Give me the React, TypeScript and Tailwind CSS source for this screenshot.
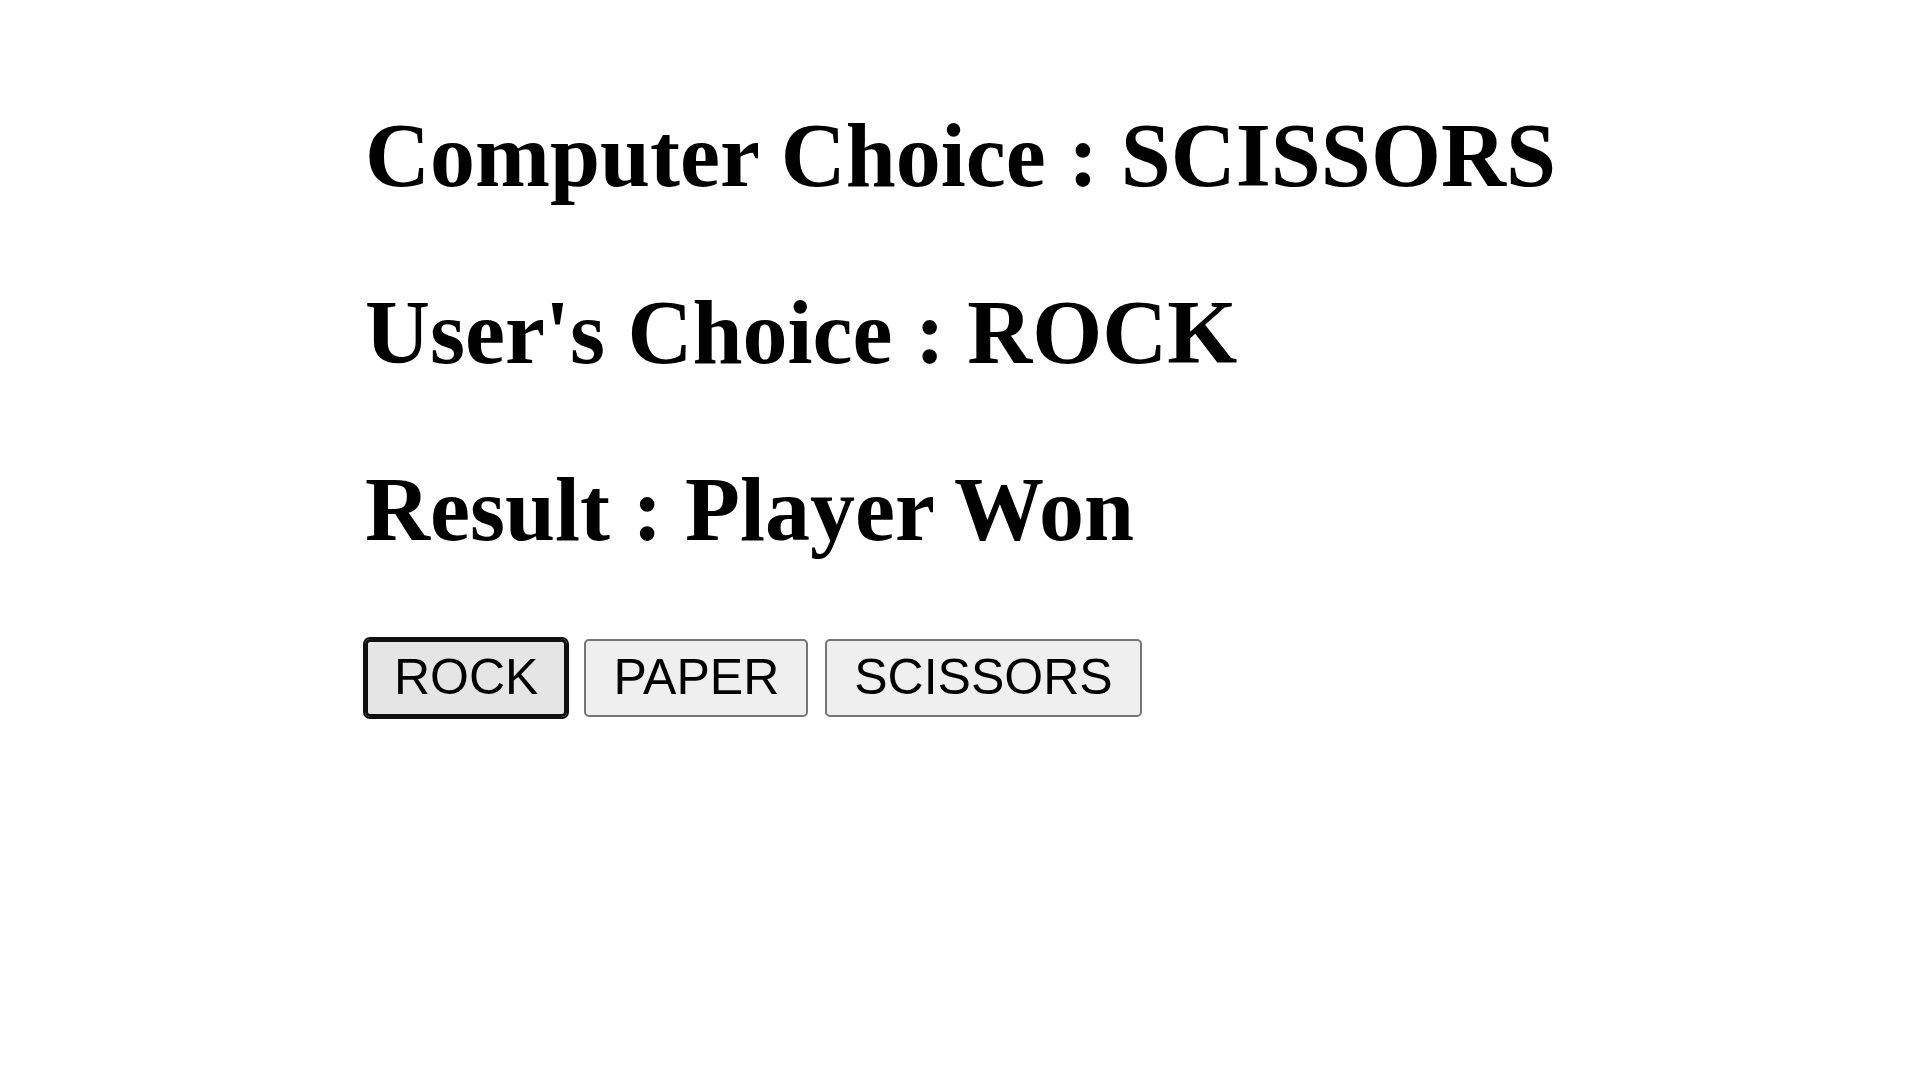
import { useState } from "react"

const choices = ["ROCK", "PAPER", "SCISSORS"]

const App = () => {
    const [computer] = useState("SCISSORS")
    const [user, setUser] = useState("ROCK")

    return (
        <div className="min-h-screen bg-white pl-[365px] pt-[105px] text-black">
            <div className="flex flex-col gap-[75px] font-['Liberation_Serif','Times_New_Roman',serif] text-[90px] leading-[102px] font-bold">
                <h2>Computer Choice : {computer}</h2>
                <h2>User's Choice : {user}</h2>
                <h2>Result : Player Won</h2>
            </div>
            <div className="mt-[78px] flex items-start gap-[17px]">
                {choices.map((c) => (
                    <button
                        key={c}
                        onClick={() => setUser(c)}
                        className={
                            c === user
                                ? "rounded-[5px] border-[3px] border-[#101010] bg-[#e5e5e5] px-[26px] py-[7px] font-['Liberation_Sans',Arial,sans-serif] text-[50px] leading-[57.5px] text-black outline-2 outline-[#101010]"
                                : "rounded-[5px] border-2 border-[#767676] bg-[#efefef] px-[27px] py-2 font-['Liberation_Sans',Arial,sans-serif] text-[50px] leading-[57.5px] text-black"
                        }
                    >
                        {c}
                    </button>
                ))}
            </div>
        </div>
    )
}

export default App
